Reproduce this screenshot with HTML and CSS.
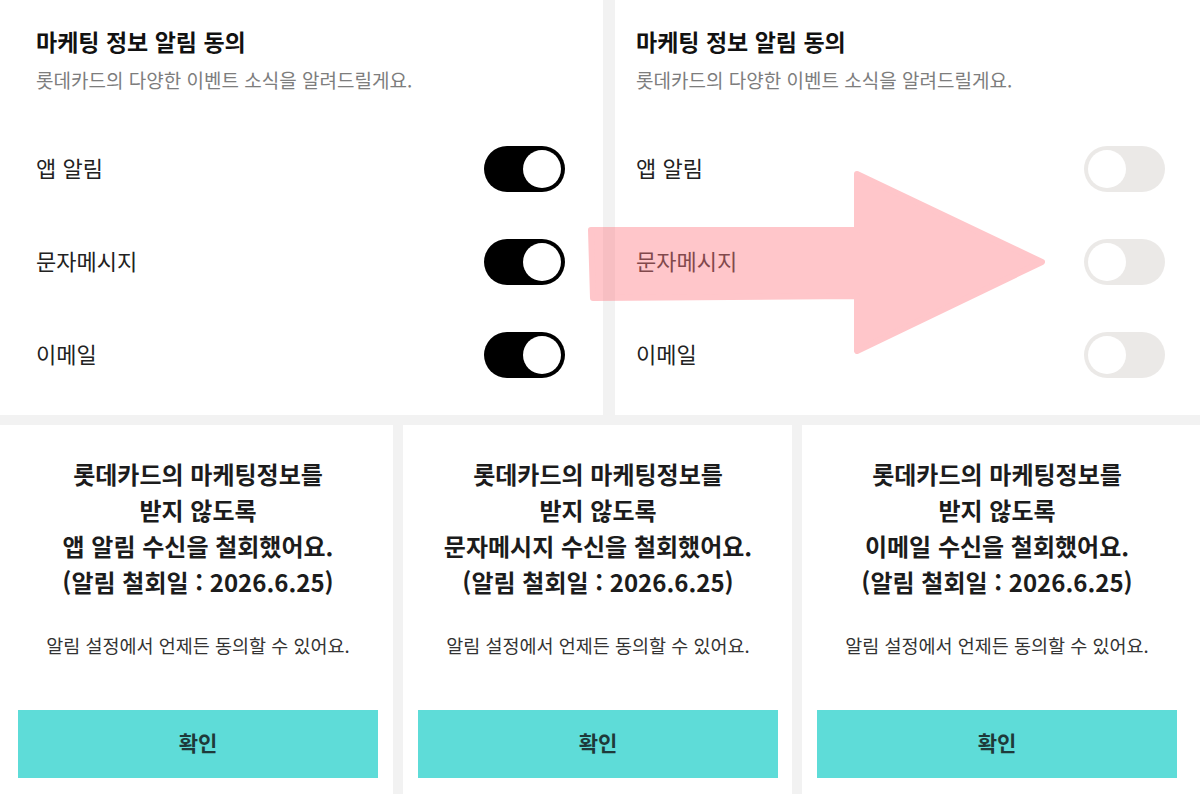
FILE: index.html
```html
<!DOCTYPE html>
<html lang="ko">
<head>
	<meta charset="utf-8">
	<title>마케팅 정보 알림 동의</title>
	<link rel="stylesheet" href="styles.css">
</head>
<body>
<div class="page">

	<!-- 알림 설정 화면 (켜짐 / 꺼짐) -->
	<div class="top-row">
		<section class="panel panel-left">
			<h2 class="panel-title">마케팅 정보 알림 동의</h2>
			<p class="panel-desc">롯데카드의 다양한 이벤트 소식을 알려드릴게요.</p>
			<ul class="rows">
				<li class="row"><span class="label">앱 알림</span><span class="switch on"><span class="knob"></span></span></li>
				<li class="row"><span class="label">문자메시지</span><span class="switch on"><span class="knob"></span></span></li>
				<li class="row"><span class="label">이메일</span><span class="switch on"><span class="knob"></span></span></li>
			</ul>
		</section>
		<section class="panel panel-right">
			<h2 class="panel-title">마케팅 정보 알림 동의</h2>
			<p class="panel-desc">롯데카드의 다양한 이벤트 소식을 알려드릴게요.</p>
			<ul class="rows">
				<li class="row"><span class="label">앱 알림</span><span class="switch off"><span class="knob"></span></span></li>
				<li class="row"><span class="label">문자메시지</span><span class="switch off"><span class="knob"></span></span></li>
				<li class="row"><span class="label">이메일</span><span class="switch off"><span class="knob"></span></span></li>
			</ul>
		</section>
	</div>

	<!-- 수신 철회 안내 팝업 -->
	<div class="bottom-row">
		<div class="card card-first">
			<p class="card-title">롯데카드의 마케팅정보를<br>받지 않도록<br>앱 알림 수신을 철회했어요.<br>(알림 철회일 : 2026.6.25)</p>
			<p class="card-note">알림 설정에서 언제든 동의할 수 있어요.</p>
			<button class="btn-ok">확인</button>
		</div>
		<div class="card">
			<p class="card-title">롯데카드의 마케팅정보를<br>받지 않도록<br>문자메시지 수신을 철회했어요.<br>(알림 철회일 : 2026.6.25)</p>
			<p class="card-note">알림 설정에서 언제든 동의할 수 있어요.</p>
			<button class="btn-ok">확인</button>
		</div>
		<div class="card">
			<p class="card-title">롯데카드의 마케팅정보를<br>받지 않도록<br>이메일 수신을 철회했어요.<br>(알림 철회일 : 2026.6.25)</p>
			<p class="card-note">알림 설정에서 언제든 동의할 수 있어요.</p>
			<button class="btn-ok">확인</button>
		</div>
	</div>

	<!-- 화살표 -->
	<svg class="arrow" width="1200" height="794" viewBox="0 0 1200 794">
		<g opacity="0.43">
			<polygon points="591,230 857,230 857,174 1042,262 857,351 857,296 593,298"
				fill="#ff7c85" stroke="#ff7c85" stroke-width="6" stroke-linejoin="round"/>
		</g>
	</svg>

</div>
</body>
</html>
```

FILE: styles.css
```css
* {
	box-sizing: border-box;
}

body {
	margin: 0;
	background-color: #f2f2f2;
	font-family: "Noto Sans CJK KR", "Noto Sans", sans-serif;
	color: #222;
	overflow: hidden;
}

.page {
	position: relative;
	width: 1200px;
	height: 794px;
}

/* top: settings panels */
.top-row {
	display: grid;
	grid-template-columns: 603px 1fr;
	gap: 12px;
	height: 415px;
}

.panel {
	background-color: white;
	padding-top: 26px;
}

.panel-left {
	padding-left: 36px;
	padding-right: 38px;
}

.panel-right {
	padding-left: 21px;
	padding-right: 35px;
}

.panel-title {
	margin: 0;
	font-size: 23px;
	line-height: 30px;
	font-weight: 700;
	color: #111;
}

.panel-desc {
	margin: 11px 0 0;
	font-size: 19px;
	line-height: 26px;
	color: #7d7d7d;
}

.rows {
	list-style: none;
	margin: 29px 0 0;
	padding: 0;
}

.row {
	display: flex;
	align-items: center;
	justify-content: space-between;
	height: 93px;
}

.label {
	font-size: 22px;
	line-height: 30px;
	padding-bottom: 4px;
	color: #222;
}

/* toggle switch */
.switch {
	display: flex;
	align-items: center;
	width: 81px;
	height: 46px;
	padding: 0 4px;
	border-radius: 23px;
}

.switch .knob {
	width: 38px;
	height: 38px;
	border-radius: 50%;
	background-color: white;
}

.switch.on {
	background-color: #000;
	justify-content: flex-end;
}

.switch.off {
	background-color: #ebe9e7;
	justify-content: flex-start;
}

/* bottom: popup cards */
.bottom-row {
	display: grid;
	grid-template-columns: 393px 389px 1fr;
	gap: 10px;
	margin-top: 10px;
	height: 369px;
}

.card {
	background-color: white;
	padding: 31px 0 0 15px;
	text-align: center;
}

.card-first {
	padding-left: 18px;
}

.card-title {
	width: 360px;
	margin: 0;
	font-size: 24px;
	line-height: 36px;
	font-weight: 700;
	color: #1c1c1c;
}

.card-note {
	width: 360px;
	margin: 32px 0 0;
	font-size: 18.5px;
	line-height: 26px;
	color: #333;
}

.btn-ok {
	display: block;
	width: 360px;
	height: 68px;
	margin-top: 52px;
	padding: 0 0 5px;
	border: none;
	background-color: #5edcd8;
	font-family: inherit;
	font-size: 21px;
	font-weight: 700;
	color: #1e3a3a;
}

.arrow {
	position: absolute;
	top: 0;
	left: 0;
	pointer-events: none;
}
```
